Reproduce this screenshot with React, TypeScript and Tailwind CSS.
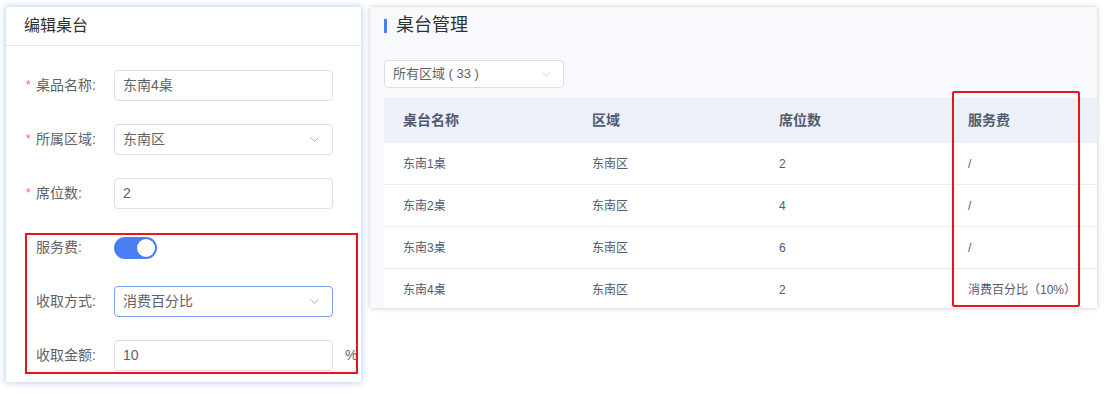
import { ChevronDown } from "lucide-react";

const font = "font-['Liberation_Sans','Noto_Sans_CJK_SC',sans-serif]";

type Row = { name: string; area: string; seats: string; fee: string };

const rows: Row[] = [
  { name: "东南1桌", area: "东南区", seats: "2", fee: "/" },
  { name: "东南2桌", area: "东南区", seats: "4", fee: "/" },
  { name: "东南3桌", area: "东南区", seats: "6", fee: "/" },
  { name: "东南4桌", area: "东南区", seats: "2", fee: "消费百分比（10%）" },
];

function Label({ text, required }: { text: string; required?: boolean }) {
  return (
    <div className="relative w-[78px] shrink-0 text-[14px] text-[#606266]">
      {required ? (
        <span className="absolute left-[-10px] top-[1px] text-[12px] text-[#f56c6c]">*</span>
      ) : null}
      {text}
    </div>
  );
}

function Field({ value, select, focus }: { value: string; select?: boolean; focus?: boolean }) {
  return (
    <div
      className={`flex h-[31px] w-[219px] items-center justify-between rounded-[4px] border bg-white pl-[8px] pr-[10px] text-[14px] text-[#606266] ${
        focus ? "border-[#7d9ef3]" : "border-[#dcdfe6]"
      }`}
    >
      <span>{value}</span>
      {select ? <ChevronDown size={15} strokeWidth={1.5} className="text-[#a8abb2]" /> : null}
    </div>
  );
}

function EditPanel() {
  return (
    <div className="relative h-[375px] w-[355px] shrink-0 bg-white shadow-[0_0_6px_1px_rgba(90,140,235,0.4)]">
      <div className="flex h-[39px] items-center border-b border-[#e4e7ed] px-[18px] text-[16px] text-[#303133]">
        编辑桌台
      </div>
      <div className="flex flex-col gap-[23px] pl-[30px] pt-[24px]">
        <div className="flex h-[31px] items-center">
          <Label text="桌品名称:" required />
          <Field value="东南4桌" />
        </div>
        <div className="flex h-[31px] items-center">
          <Label text="所属区域:" required />
          <Field value="东南区" select />
        </div>
        <div className="flex h-[31px] items-center">
          <Label text="席位数:" required />
          <Field value="2" />
        </div>
        <div className="flex h-[31px] items-center">
          <Label text="服务费:" />
          <div className="flex h-[22px] w-[43px] items-center justify-end rounded-full bg-[#4b7df5] pr-[2px]">
            <div className="h-[18px] w-[18px] rounded-full bg-white" />
          </div>
        </div>
        <div className="flex h-[31px] items-center">
          <Label text="收取方式:" />
          <Field value="消费百分比" select focus />
        </div>
        <div className="flex h-[31px] items-center">
          <Label text="收取金额:" />
          <Field value="10" />
          <span className="ml-[12px] text-[14px] text-[#606266]">%</span>
        </div>
      </div>
      <div className="absolute left-[19px] top-[226px] h-[141px] w-[333px] border-2 border-[#e8161c]" />
    </div>
  );
}

function TablePanel() {
  return (
    <div className="relative h-[301px] w-[727px] shrink-0 overflow-hidden bg-[#f8f9fd] pl-[14px] shadow-[0_0_5px_rgba(0,0,0,0.22)]">
      <div className="flex h-[36px] items-center pt-[1px]">
        <div className="h-[14px] w-[3px] bg-[#4b7df5]" />
        <span className="ml-[9px] text-[18px] text-[#303133]">桌台管理</span>
      </div>
      <div className="mt-[17px] flex h-[28px] w-[180px] items-center justify-between rounded-[4px] border border-[#dcdfe6] bg-white pl-[8px] pr-[10px] text-[13px] text-[#606266]">
        <span>所有区域 ( 33 )</span>
        <ChevronDown size={13} strokeWidth={1.5} className="text-[#c0c4cc]" />
      </div>
      <div className="mt-[10px] w-[713px] bg-white">
        <div className="grid h-[45px] grid-cols-[189px_187px_189px_1fr] items-center bg-[#ebf0f9] pl-[19px] text-[14px] font-bold text-[#515a6e]">
          <span>桌台名称</span>
          <span>区域</span>
          <span>席位数</span>
          <span>服务费</span>
        </div>
        {rows.map((r) => (
          <div
            key={r.name}
            className="grid h-[42px] grid-cols-[189px_187px_189px_1fr] items-center border-b border-[#e8eef8] pl-[19px] text-[12px] text-[#515a6e]"
          >
            <span>{r.name}</span>
            <span>{r.area}</span>
            <span>{r.seats}</span>
            <span>{r.fee}</span>
          </div>
        ))}
      </div>
      <div className="absolute left-[582px] top-[84px] h-[216px] w-[128px] rounded-[2px] border-2 border-[#e8161c]" />
    </div>
  );
}

export default function App() {
  return (
    <div className={`${font} flex h-[394px] w-[1110px] items-start gap-[9px] bg-white pl-[6px] pt-[7px]`}>
      <EditPanel />
      <TablePanel />
    </div>
  );
}
